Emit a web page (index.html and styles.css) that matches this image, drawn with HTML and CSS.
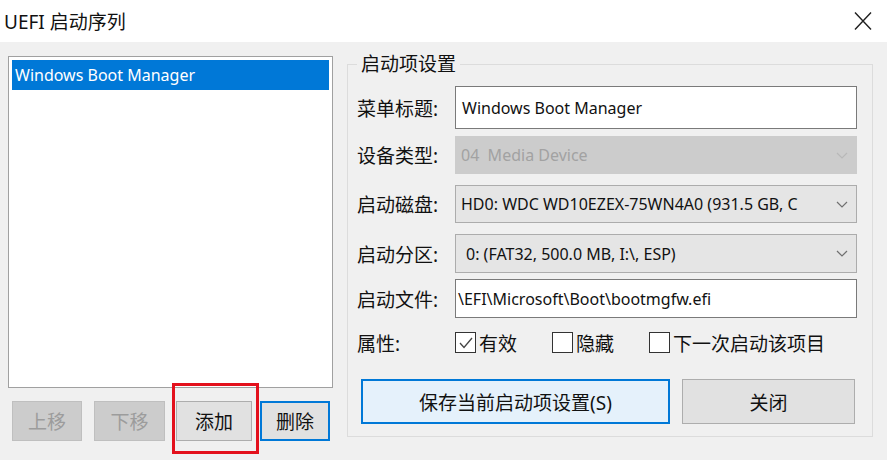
FILE: index.html
```html
<!DOCTYPE html>
<html lang="zh-CN">
<head>
  <meta charset="UTF-8" />
  <title>UEFI 启动序列</title>
  <link rel="stylesheet" href="styles.css">
</head>
<body>

  <div class="titlebar">
    <span class="title">UEFI 启动序列</span>
    <span class="close">
      <svg width="18" height="20" viewBox="0 0 18 20">
        <path d="M1 1.5 L17 18.5 M17 1.5 L1 18.5" stroke="#1f1f1f" stroke-width="1.4" fill="none"/>
      </svg>
    </span>
  </div>

  <div class="content">
    <div class="left">
      <div class="list">
        <div class="list-item selected">Windows Boot Manager</div>
      </div>
      <div class="list-buttons">
        <button class="btn btn-disabled btn-up">上移</button>
        <button class="btn btn-disabled btn-down">下移</button>
        <div class="add-wrap">
          <button class="btn btn-add">添加</button>
          <span class="highlight"></span>
        </div>
        <button class="btn btn-del">删除</button>
      </div>
    </div>

    <fieldset class="group">
      <legend>启动项设置</legend>

      <div class="field row1">
        <span class="label">菜单标题:</span>
        <div class="control input pad-6">Windows Boot Manager</div>
      </div>

      <div class="field row2">
        <span class="label">设备类型:</span>
        <div class="control select disabled pad-5">
          <span>04&nbsp; Media Device</span>
          <svg class="chev" width="12" height="7" viewBox="0 0 12 7"><polyline points="1,1 6,6 11,1" fill="none" stroke="#b8b8b8" stroke-width="1.2"/></svg>
        </div>
      </div>

      <div class="field row3">
        <span class="label">启动磁盘:</span>
        <div class="control select pad-5">
          <span>HD0: WDC WD10EZEX-75WN4A0 (931.5 GB, C</span>
          <svg class="chev" width="12" height="7" viewBox="0 0 12 7"><polyline points="1,1 6,6 11,1" fill="none" stroke="#707070" stroke-width="1.2"/></svg>
        </div>
      </div>

      <div class="field row4">
        <span class="label">启动分区:</span>
        <div class="control select pad-10">
          <span>0: (FAT32, 500.0 MB, I:\, ESP)</span>
          <svg class="chev" width="12" height="7" viewBox="0 0 12 7"><polyline points="1,1 6,6 11,1" fill="none" stroke="#707070" stroke-width="1.2"/></svg>
        </div>
      </div>

      <div class="field row5">
        <span class="label">启动文件:</span>
        <div class="control input pad-2">\EFI\Microsoft\Boot\bootmgfw.efi</div>
      </div>

      <div class="field row6">
        <span class="label">属性:</span>
        <div class="checks">
          <span class="check">
            <span class="box">
              <svg width="18" height="18" viewBox="0 0 18 18"><polyline points="3,9 7,13.5 15,4" fill="none" stroke="#444" stroke-width="1.3"/></svg>
            </span>有效
          </span>
          <span class="check"><span class="box"></span>隐藏</span>
          <span class="check"><span class="box"></span>下一次启动该项目</span>
        </div>
      </div>

      <div class="actions">
        <button class="btn btn-save">保存当前启动项设置(S)</button>
        <button class="btn btn-close">关闭</button>
      </div>
    </fieldset>
  </div>

</body>
</html>
```

FILE: styles.css
```css
* {
  box-sizing: border-box;
  margin: 0; padding: 0;
}
body {
  font-family: "Noto Sans", "Noto Sans CJK SC", sans-serif;
  background: #f0f0f0;
  color: #111111;
  width: 887px;
  height: 460px;
  overflow: hidden;
}


.titlebar {
  height: 42px;
  background: #ffffff;
  display: flex;
  align-items: center;
  justify-content: space-between;
  padding: 0 15px 0 4px;
}
.title {
  font-size: 19px;
}
.close svg {
  display: block;
}

.content {
  display: flex;
  align-items: flex-start;
  padding-left: 8px;
}


.left {
  width: 325px;
  padding-top: 14px;
}
.list {
  height: 332px;
  background: #ffffff;
  border: 1px solid #a0a0a0;
  padding: 3px;
}
.list-item {
  height: 30px;
  display: flex;
  align-items: center;
  padding-left: 3px;
  font-size: 16px;
}
.list-item.selected {
  background: #0078d7;
  color: #ffffff;
}

.list-buttons {
  display: flex;
  margin-top: 13px;
}

.btn {
  font-family: inherit;
  font-size: 19px;
  color: #111111;
  background: #e1e1e1;
  border: 1px solid #adadad;
  height: 40px;
}
.btn-disabled {
  background: #cccccc;
  border-color: #bfbfbf;
  color: #9c9c9c;
}
.btn-up {
  width: 70px;
  margin-left: 4px;
}
.btn-down {
  width: 71px;
  margin-left: 12px;
}
.add-wrap {
  position: relative;
  margin-left: 11px;
}
.btn-add {
  width: 76px;
  display: block;
}
.highlight {
  position: absolute;
  left: -4px;
  right: -7px;
  top: -18px;
  bottom: -13px;
  border: 3px solid #e3101c;
}
.btn-del {
  width: 70px;
  margin-left: 8px;
  border: 2px solid #0078d7;
}


.group {
  width: 526px;
  margin: 10px 0 0 14px;
  border: 1px solid #dcdcdc;
  padding: 0 9px 12px 9px;
}
.group legend {
  font-size: 19px;
  line-height: 24px;
  padding: 0 4px;
}

.field {
  display: flex;
  align-items: center;
}
.label {
  width: 98px;
  font-size: 19px;
}
.control {
  width: 402px;
  height: 100%;
  display: flex;
  align-items: center;
  justify-content: space-between;
  font-size: 16px;
  white-space: nowrap;
}
.input {
  background: #ffffff;
  border: 1px solid #7a7a7a;
}
.select {
  background: #e5e5e5;
  border: 1px solid #acacac;
  padding-right: 8px;
}
.select.disabled {
  background: #cccccc;
  border-color: #cccccc;
  color: #a2a2a2;
}
.chev {
  display: block;
}
.pad-2 { padding-left: 2px; }
.pad-5 { padding-left: 5px; }
.pad-6 { padding-left: 6px; }
.pad-10 { padding-left: 10px; }

.row1 { margin-top: 10px; height: 43px; }
.row2 { margin-top: 7px; height: 38px; }
.row3 { margin-top: 11px; height: 38px; }
.row4 { margin-top: 11px; height: 39px; }
.row5 { margin-top: 6px; height: 39px; }
.row6 { margin-top: 13px; height: 23px; }

.checks {
  display: flex;
  gap: 35px;
}
.check {
  display: flex;
  align-items: center;
  font-size: 19px;
}
.box {
  width: 21px;
  height: 21px;
  background: #ffffff;
  border: 1px solid #333333;
  margin-right: 3px;
  display: flex;
  align-items: center;
  justify-content: center;
}

.actions {
  display: flex;
  margin-top: 25px;
}
.btn-save {
  width: 309px;
  height: 45px;
  margin-left: 4px;
  background: #e5f1fb;
  border: 2px solid #0078d7;
}
.btn-close {
  width: 173px;
  height: 45px;
  margin-left: 12px;
}
```
